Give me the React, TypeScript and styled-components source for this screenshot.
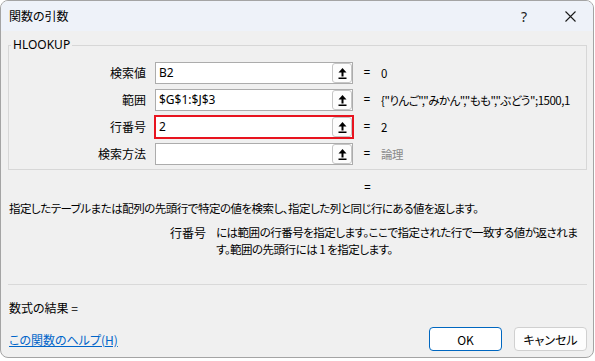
import React from "react";
import styled, { createGlobalStyle } from "styled-components";

const GlobalStyle = createGlobalStyle`
  html, body {
    margin: 0;
    padding: 0;
    background: #ffffff;
  }
  body {
    font-family: "Noto Sans CJK JP", "Noto Sans", sans-serif;
    font-size: 12px;
    color: #000;
  }
`;

const Dialog = styled.div`
  width: 594px;
  height: 358px;
  box-sizing: border-box;
  border: 1px solid #a4a4a4;
  border-radius: 8px;
  overflow: hidden;
  background: #f0f0f0;
  display: flex;
  flex-direction: column;
  font-feature-settings: "palt";
`;

const TitleBar = styled.div`
  height: 30px;
  flex-shrink: 0;
  background: #eef2f9;
  display: flex;
  align-items: center;
  padding-left: 8px;
`;

const Title = styled.div`
  flex: 1;
  font-size: 12px;
  line-height: 16px;
`;

const TitleButton = styled.button`
  width: 46px;
  height: 30px;
  border: none;
  background: transparent;
  padding: 0;
  display: flex;
  align-items: center;
  justify-content: center;
  font-family: "Noto Sans", sans-serif;
  font-size: 14px;
  color: #222;
`;

const Body = styled.div`
  flex: 1;
  display: flex;
  flex-direction: column;
  padding: 6px 6px 0 7px;
`;

const Group = styled.fieldset`
  margin: 0;
  padding: 9px 0 4px;
  min-width: 0;
  border: 1px solid #d7d7d7;
  display: grid;
  grid-template-columns: 137px 198px 1fr;
  column-gap: 9px;
  row-gap: 5px;
  align-items: center;
`;

const Legend = styled.legend`
  margin-left: 2px;
  padding: 0 2px;
  font-size: 12px;
  line-height: 16px;
  font-family: "Noto Sans", sans-serif;
`;

const Label = styled.div`
  text-align: right;
  line-height: 22px;
`;

const Field = styled.div<{ $highlight?: boolean }>`
  height: 22px;
  box-sizing: border-box;
  background: #fff;
  border: 1px solid ${(p) => (p.$highlight ? "#e8141f" : "#acacac")};
  box-shadow: ${(p) => (p.$highlight ? "0 0 0 1px #e8141f" : "none")};
  display: flex;
  align-items: center;
  padding-left: 3px;
`;

const FieldText = styled.span`
  flex: 1;
  font-family: "Noto Sans", sans-serif;
  font-size: 12px;
  line-height: 20px;
  white-space: nowrap;
  overflow: hidden;
`;

const PickButton = styled.span`
  width: 20px;
  height: 20px;
  box-sizing: border-box;
  border: 1px solid #c6c6c6;
  border-radius: 3px;
  background: #fdfdfd;
  display: flex;
  align-items: center;
  justify-content: center;
`;

const Result = styled.div`
  display: flex;
  align-items: center;
  white-space: nowrap;
  overflow: hidden;
  line-height: 22px;
`;

const Eq = styled.span`
  width: 10px;
  text-align: center;
  font-family: "Noto Sans", sans-serif;
`;

const Value = styled.span<{ $muted?: boolean }>`
  margin-left: 9px;
  font-size: 11.5px;
  letter-spacing: -0.5px;
  color: ${(p) => (p.$muted ? "#8a8a8a" : "#000")};
`;

const FormulaEq = styled.div`
  margin-top: 10px;
  padding-left: 356px;
  line-height: 16px;
  font-family: "Noto Sans", sans-serif;
`;

const Description = styled.div`
  margin-top: 4px;
  padding-left: 1px;
  line-height: 16px;
  font-size: 11.5px;
  letter-spacing: -0.5px;
  white-space: nowrap;
`;

const ArgHelp = styled.div`
  margin-top: 8px;
  display: flex;
  gap: 10px;
  line-height: 17px;
`;

const ArgName = styled.div`
  width: 198px;
  text-align: right;
  flex-shrink: 0;
`;

const ArgText = styled.div`
  white-space: nowrap;
  font-size: 11.5px;
  letter-spacing: -0.5px;
`;

const Separator = styled.div`
  margin-top: 26px;
  height: 1px;
  background: #d9d9d9;
`;

const FormulaResult = styled.div`
  margin-top: 15px;
  padding-left: 1px;
  line-height: 16px;
`;

const Footer = styled.div`
  margin-top: 11px;
  display: flex;
  align-items: center;
  gap: 12px;
`;

const HelpLink = styled.a`
  flex: 1;
  padding-left: 1px;
  color: #0065c9;
  text-decoration: underline;
  line-height: 16px;
  margin-top: 2px;
`;

const ActionButton = styled.button<{ $primary?: boolean }>`
  width: 73px;
  height: 24px;
  box-sizing: border-box;
  border-radius: 4px;
  border: 1px solid ${(p) => (p.$primary ? "#0067c0" : "#d0d0d0")};
  background: ${(p) => (p.$primary ? "#ffffff" : "#fdfdfd")};
  font-family: "Noto Sans CJK JP", "Noto Sans", sans-serif;
  font-feature-settings: "palt";
  font-size: 12px;
  color: #000;
  padding: 0;
`;

const UpArrow = () => (
  <svg width="9" height="11" viewBox="0 0 9 11">
    <polygon points="4.5,0 0.5,4.5 8.5,4.5" fill="#000" />
    <rect x="3.5" y="4" width="2" height="4.5" fill="#000" />
    <rect x="0.5" y="9.5" width="8" height="1.5" fill="#000" />
  </svg>
);

const CloseIcon = () => (
  <svg width="11" height="11" viewBox="0 0 11 11">
    <path d="M0.5 0.5 L10.5 10.5 M10.5 0.5 L0.5 10.5" stroke="#1a1a1a" strokeWidth="1.1" />
  </svg>
);

type Arg = { label: string; input: string; value: string; muted?: boolean; highlight?: boolean };

const args: Arg[] = [
  { label: "検索値", input: "B2", value: "0" },
  { label: "範囲", input: "$G$1:$J$3", value: '{"りんご","みかん","もも","ぶどう";1500,1' },
  { label: "行番号", input: "2", value: "2", highlight: true },
  { label: "検索方法", input: "", value: "論理", muted: true },
];

export default function App() {
  return (
    <>
      <GlobalStyle />
      <Dialog>
        <TitleBar>
          <Title>関数の引数</Title>
          <TitleButton>?</TitleButton>
          <TitleButton>
            <CloseIcon />
          </TitleButton>
        </TitleBar>
        <Body>
          <Group>
            <Legend>HLOOKUP</Legend>
            {args.map((a) => (
              <React.Fragment key={a.label}>
                <Label>{a.label}</Label>
                <Field $highlight={a.highlight}>
                  <FieldText>{a.input}</FieldText>
                  <PickButton>
                    <UpArrow />
                  </PickButton>
                </Field>
                <Result>
                  <Eq>=</Eq>
                  <Value $muted={a.muted}>{a.value}</Value>
                </Result>
              </React.Fragment>
            ))}
          </Group>
          <FormulaEq>=</FormulaEq>
          <Description>
            指定したテーブルまたは配列の先頭行で特定の値を検索し、指定した列と同じ行にある値を返します。
          </Description>
          <ArgHelp>
            <ArgName>行番号</ArgName>
            <ArgText>
              には範囲の行番号を指定します。ここで指定された行で一致する値が返されま
              <br />
              す。範囲の先頭行には 1 を指定します。
            </ArgText>
          </ArgHelp>
          <Separator />
          <FormulaResult>数式の結果 =</FormulaResult>
          <Footer>
            <HelpLink href="#">この関数のヘルプ(H)</HelpLink>
            <ActionButton $primary>OK</ActionButton>
            <ActionButton>キャンセル</ActionButton>
          </Footer>
        </Body>
      </Dialog>
    </>
  );
}
